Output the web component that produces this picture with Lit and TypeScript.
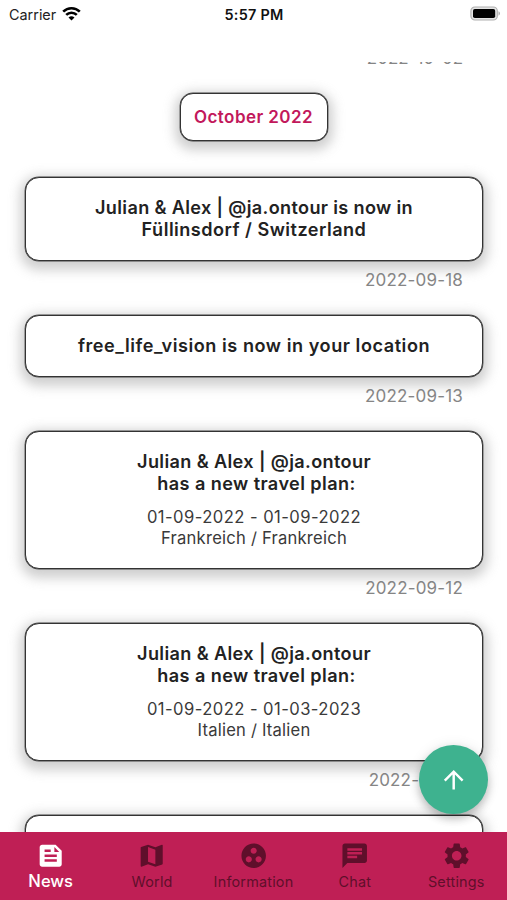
import { LitElement, html, svg, css } from "lit";
import { customElement, property } from "lit/decorators.js";
import { classMap } from "lit/directives/class-map.js";

const ICONS: Record<string, string> = {
  feed: "M16 3H5c-1.1 0-2 .9-2 2v14c0 1.1.9 2 2 2h14c1.1 0 2-.9 2-2V8l-5-5zM7 7h5v2H7V7zm10 10H7v-2h10v2zm0-4H7v-2h10v2zm-2-4V5l4 4h-4z",
  map: "M20.5 3l-.16.03L15 5.1 9 3 3.36 4.9c-.21.07-.36.25-.36.48V20.5c0 .28.22.5.5.5l.16-.03L9 18.9l6 2.1 5.64-1.9c.21-.07.36-.25.36-.48V3.5c0-.28-.22-.5-.5-.5zM15 19l-6-2.11V5l6 2.11V19z",
  group: "M12 2C6.48 2 2 6.48 2 12s4.48 10 10 10 10-4.48 10-10S17.52 2 12 2zM8 17.5c-1.38 0-2.5-1.12-2.5-2.5s1.12-2.5 2.5-2.5 2.5 1.12 2.5 2.5-1.12 2.5-2.5 2.5zM9.5 8c0-1.38 1.12-2.5 2.5-2.5s2.5 1.12 2.5 2.5-1.12 2.5-2.5 2.5S9.5 9.38 9.5 8zm6.5 9.5c-1.38 0-2.5-1.12-2.5-2.5s1.12-2.5 2.5-2.5 2.5 1.12 2.5 2.5-1.12 2.5-2.5 2.5z",
  chat: "M20 2H4c-1.1 0-1.99.9-1.99 2L2 22l4-4h14c1.1 0 2-.9 2-2V4c0-1.1-.9-2-2-2zM6 9h12v2H6V9zm8 5H6v-2h8v2zm4-6H6V6h12v2z",
  settings: "M19.43 12.98c.04-.32.07-.64.07-.98s-.03-.66-.07-.98l2.11-1.65c.19-.15.24-.42.12-.64l-2-3.46c-.12-.22-.39-.3-.61-.22l-2.49 1c-.52-.4-1.08-.73-1.69-.98l-.38-2.65C14.46 2.18 14.25 2 14 2h-4c-.25 0-.46.18-.49.42l-.38 2.65c-.61.25-1.17.59-1.69.98l-2.49-1c-.23-.09-.49 0-.61.22l-2 3.46c-.13.22-.07.49.12.64l2.11 1.65c-.04.32-.07.65-.07.98s.03.66.07.98l-2.11 1.65c-.19.15-.24.42-.12.64l2 3.46c.12.22.39.3.61.22l2.49-1c.52.4 1.08.73 1.69.98l.38 2.65c.03.24.24.42.49.42h4c.25 0 .46-.18.49-.42l.38-2.65c.61-.25 1.17-.59 1.69-.98l2.49 1c.23.09.49 0 .61-.22l2-3.46c.12-.22.07-.49-.12-.64l-2.11-1.65zM12 15.9c-2.15 0-3.9-1.75-3.9-3.9s1.75-3.9 3.9-3.9 3.9 1.75 3.9 3.9-1.75 3.9-3.9 3.9z",
  up: "M4 12l1.41 1.41L11 7.83V20h2V7.83l5.58 5.59L20 12l-8-8-8 8z",
};

@customElement("md-icon")
class MdIcon extends LitElement {
  @property() name = "";
  static styles = css`
    :host { display: block; width: 29.4px; height: 29.4px; }
    svg { display: block; width: 100%; height: 100%; fill: currentColor; }
  `;
  render() {
    return html`<svg viewBox="0 0 24 24">${svg`<path d=${ICONS[this.name]}></path>`}</svg>`;
  }
}

interface Line { text: string; tracking: number; }

@customElement("news-card")
class NewsCard extends LitElement {
  @property({ attribute: false }) heading: Line[] = [];
  @property({ attribute: false }) details: Line[] = [];
  @property() date = "";
  static styles = css`
    :host { display: block; height: var(--slot-height); }
    .card {
      box-sizing: border-box;
      height: calc(100% - 54px);
      margin: 0 24px 0 25px;
      padding-top: 18px;
      border: 1px solid #333;
      border-radius: 14px;
      background: #fff;
      box-shadow: 0 0 0 0.4px #444, 0 4px 12px 5px rgba(150, 150, 150, 0.46);
      text-align: center;
      color: #222;
    }
    .line { font-size: 18.1px; font-weight: 600; line-height: 22px; white-space: pre; }
    .details { margin-top: 13px; }
    .detail { font-size: 16.6px; line-height: 21px; color: #3a3a3a; }
    .date {
      margin: 9px 44px 0 0;
      text-align: right;
      font-size: 17px;
      line-height: 21px;
      letter-spacing: 0.18px;
      color: #858585;
    }
  `;
  private line(l: Line, name: string) {
    return html`<div class=${name} style="letter-spacing:${l.tracking}px">${l.text}</div>`;
  }
  render() {
    return html`
      <div class="card">
        ${this.heading.map((l) => this.line(l, "line"))}
        ${this.details.length
          ? html`<div class="details">${this.details.map((l) => this.line(l, "detail"))}</div>`
          : null}
      </div>
      <div class="date">${this.date}</div>
    `;
  }
}

interface NewsItem { height: number; heading: Line[]; details: Line[]; date: string; }

const PLAN: Line[] = [
  { text: "Julian & Alex | @ja.ontour", tracking: 0.37 },
  { text: " has a new travel plan:", tracking: 0.42 },
];

@customElement("app-root")
class AppRoot extends LitElement {
  static styles = css`
    :host {
      display: flex;
      flex-direction: column;
      position: relative;
      width: 507px;
      height: 900px;
      overflow: hidden;
      background: #fff;
      font-family: Inter, "Liberation Sans", sans-serif;
    }
    .status {
      display: grid;
      grid-template-columns: 1fr auto 1fr;
      align-items: center;
      height: 28px;
      margin-bottom: 34px;
      padding: 0 6px 0 9px;
      flex: none;
      font-size: 14.4px;
      color: #222;
    }
    .carrier { display: flex; align-items: center; gap: 6px; }
    .wifi { width: 19px; height: 15px; margin-top: -2px; }
    .time { font-weight: 600; color: #111; letter-spacing: 0.28px; margin-right: 2px; }
    .battery { justify-self: end; width: 31px; height: 15px; margin-top: -1px; }
    .feed { flex: 1; min-height: 0; overflow: hidden; display: flex; flex-direction: column; }
    .earlier {
      flex: none;
      height: 21px;
      margin: -14.5px 44px 24.5px 0;
      text-align: right;
      font-size: 17px;
      line-height: 21px;
      color: #858585;
    }
    .month {
      flex: none;
      box-sizing: border-box;
      align-self: center;
      width: 148px;
      height: 48px;
      margin-bottom: 36px;
      border: 1px solid #333;
      border-radius: 13px;
      background: #fff;
      box-shadow: 0 0 0 0.4px #444, 0 4px 12px 5px rgba(150, 150, 150, 0.46);
      text-align: center;
      font-size: 17px;
      font-weight: 600;
      line-height: 46px;
      color: #c2185b;
      letter-spacing: 0.42px;
    }
    news-card { flex: none; }
    .tabs {
      flex: none;
      display: grid;
      grid-template-columns: repeat(5, 1fr);
      height: 68.5px;
      background: #bf1f55;
      color: #5f0f2b;
    }
    .tab { display: flex; flex-direction: column; align-items: center; padding-top: 9.2px; }
    .label { margin-top: 3px; font-size: 14.4px; line-height: 18px; letter-spacing: 0.2px; }
    .active { color: #fff; }
    .active .label { font-size: 16.6px; font-weight: 500; margin-top: 2px; letter-spacing: 0; }
    .fab {
      position: absolute;
      right: 19.5px;
      bottom: 86.5px;
      width: 68.6px;
      height: 68.6px;
      border-radius: 50%;
      display: flex;
      align-items: center;
      justify-content: center;
      background: #3eb28f;
      color: #fff;
      box-shadow: 0 5px 8px rgba(0, 0, 0, 0.22), 0 1px 14px rgba(0, 0, 0, 0.1);
    }
  `;

  private items: NewsItem[] = [
    {
      height: 138,
      heading: [
        { text: "Julian & Alex | @ja.ontour is now in", tracking: 0.35 },
        { text: "Füllinsdorf / Switzerland", tracking: 0.48 },
      ],
      details: [],
      date: "2022-09-18",
    },
    {
      height: 116,
      heading: [{ text: "free_life_vision is now in your location", tracking: 0.55 }],
      details: [],
      date: "2022-09-13",
    },
    {
      height: 192,
      heading: PLAN,
      details: [
        { text: "01-09-2022 - 01-09-2022", tracking: 0.44 },
        { text: "Frankreich / Frankreich", tracking: 0.22 },
      ],
      date: "2022-09-12",
    },
    {
      height: 192,
      heading: PLAN,
      details: [
        { text: "01-09-2022 - 01-03-2023", tracking: 0.44 },
        { text: "Italien / Italien", tracking: 0.2 },
      ],
      date: "2022-09-11",
    },
    { height: 192, heading: [], details: [], date: "" },
  ];

  private tabs = [
    { icon: "feed", label: "News", active: true },
    { icon: "map", label: "World", active: false },
    { icon: "group", label: "Information", active: false },
    { icon: "chat", label: "Chat", active: false },
    { icon: "settings", label: "Settings", active: false },
  ];

  render() {
    return html`
      <div class="status">
        <div class="carrier">
          <span>Carrier</span>
          <svg class="wifi" viewBox="0 0 19 15" fill="none" stroke="#000" stroke-width="2.6">
            <path d="M1.2 5.6a11.8 11.8 0 0 1 16.6 0"></path>
            <path d="M4.2 8.9a7.5 7.5 0 0 1 10.6 0"></path>
            <path d="M9.5 14.6L6.5 11.6a4.3 4.3 0 0 1 6 0z" fill="#000" stroke="none"></path>
          </svg>
        </div>
        <div class="time">5:57 PM</div>
        <svg class="battery" viewBox="0 0 31 15">
          <rect x="0.9" y="1" width="26.4" height="13" rx="4" fill="#e4e4e4" stroke="#b0b0b0" stroke-width="1.2"></rect>
          <rect x="3" y="3" width="22.2" height="9" rx="1.8" fill="#000"></rect>
          <path d="M28.5 5.3a2.4 2.4 0 0 1 0 4.4z" fill="#aaa"></path>
        </svg>
      </div>
      <div class="feed">
        <div class="earlier">2022-10-02</div>
        <div class="month">October 2022</div>
        ${this.items.map(
          (i) => html`<news-card
            style="--slot-height:${i.height}px"
            .heading=${i.heading}
            .details=${i.details}
            .date=${i.date}
          ></news-card>`,
        )}
      </div>
      <div class="tabs">
        ${this.tabs.map(
          (t) => html`<div class=${classMap({ tab: true, active: t.active })}>
            <md-icon name=${t.icon}></md-icon>
            <div class="label">${t.label}</div>
          </div>`,
        )}
      </div>
      <div class="fab"><md-icon name="up"></md-icon></div>
    `;
  }
}
